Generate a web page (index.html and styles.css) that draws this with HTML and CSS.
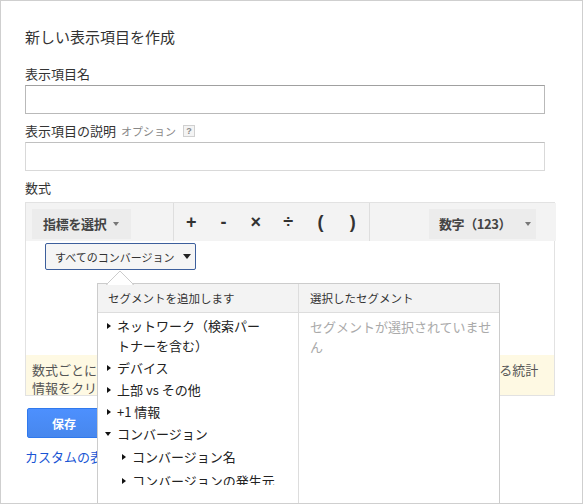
FILE: index.html
```html
<!DOCTYPE html>
<html lang="ja">
<head>
<meta charset="utf-8">
<title>新しい表示項目を作成</title>
<link rel="stylesheet" href="styles.css">
</head>
<body>
<div class="dialog">
  <h1 class="title">新しい表示項目を作成</h1>
  <div class="label label-first">表示項目名</div>
  <input class="field field-strong" type="text">
  <div class="label">表示項目の説明<span class="optional">オプション</span><span class="help">?</span></div>
  <input class="field" type="text">
  <div class="label">数式</div>
  <div class="formula">
    <div class="toolbar">
      <div class="tb-left"><span class="tb-btn tb-metric">指標を選択<span class="caret"></span></span></div>
      <div class="ops">
        <span class="op">+</span><span class="op">-</span><span class="op">×</span><span class="op">÷</span><span class="op">(</span><span class="op">)</span>
      </div>
      <div class="tb-right"><span class="tb-btn tb-num">数字（123）<span class="caret caret-num"></span></span></div>
    </div>
    <div class="formula-body">
      <span class="conv-btn">すべてのコンバージョン<span class="caret-dark"></span></span>
    </div>
    <div class="note">数式ごとにセグメントを選択すると、該当するクリックやコンバージョンに関する統計情報をクリックごとに確認できます。</div>
  </div>
  <button class="save" type="button">保存</button>
  <div class="link-row"><a class="link" href="#">カスタムの表示項目について</a></div>

  <div class="popup">
    <svg class="arrow" width="29" height="15" viewBox="0 0 29 15"><polygon points="0.5,14.5 14,1 27.5,14.5" fill="#fff" stroke="#cccccc" stroke-width="1"/><rect x="1.5" y="14" width="25" height="1.5" fill="#fff"/></svg>
    <div class="col col-left">
      <div class="col-head">セグメントを追加します</div>
      <div class="col-body">
        <ul class="seg-list">
          <li class="seg"><span class="mk"><span class="tri-r"></span></span><span class="seg-label narrow">ネットワーク（検索パートナーを含む）</span></li>
          <li class="seg"><span class="mk"><span class="tri-r"></span></span><span class="seg-label">デバイス</span></li>
          <li class="seg"><span class="mk"><span class="tri-r"></span></span><span class="seg-label">上部 vs その他</span></li>
          <li class="seg"><span class="mk"><span class="tri-r"></span></span><span class="seg-label">+1 情報</span></li>
          <li class="seg"><span class="mk"><span class="tri-d"></span></span><span class="seg-label">コンバージョン</span></li>
        </ul>
        <ul class="seg-list">
          <li class="seg sub"><span class="mk"><span class="tri-r"></span></span><span class="seg-label">コンバージョン名</span></li>
          <li class="seg sub"><span class="mk"><span class="tri-r"></span></span><span class="seg-label">コンバージョンの発生元</span></li>
          <li class="seg sub"><span class="mk"><span class="tri-r"></span></span><span class="seg-label">コンバージョンの種類</span></li>
        </ul>
      </div>
    </div>
    <div class="col col-right">
      <div class="col-head">選択したセグメント</div>
      <div class="empty">セグメントが選択されていません</div>
    </div>
  </div>
</div>
</body>
</html>
```

FILE: styles.css
```css
* { box-sizing: border-box; }

html, body {
  margin: 0;
  padding: 0;
  background: #fff;
}

body {
  font-family: "Noto Sans CJK JP", "Noto Sans", sans-serif;
  color: #333;
  font-size: 13px;
}

.dialog {
  position: relative;
  width: 583px;
  height: 504px;
  border: 1px solid #cfcfcf;
  overflow: hidden;
  padding: 26px 24px 0 24px;
  background: #fff;
}

.title {
  margin: 0;
  font-size: 15px;
  font-weight: normal;
  line-height: 20px;
  color: #333;
}

.label {
  margin-top: 7px;
  font-size: 13px;
  line-height: 20px;
  height: 20px;
  color: #333;
  display: flex;
  align-items: center;
}

.label-first { margin-top: 17px; }

.optional {
  margin-left: 5px;
  font-size: 11px;
  color: #888;
}

.help {
  margin-left: 7px;
  width: 12px;
  height: 12px;
  border: 1px solid #d0d0d0;
  background: #f4f4f4;
  color: #888;
  font-family: "Liberation Sans", sans-serif;
  font-size: 9px;
  font-weight: bold;
  line-height: 10px;
  text-align: center;
}

.field {
  display: block;
  margin: 1px 0 0 0;
  width: 520px;
  height: 29px;
  border: 1px solid #d9d9d9;
  border-top-color: #c0c0c0;
  padding: 0 6px;
  background: #fff;
  outline: none;
  font: inherit;
}

.field-strong {
  border-color: #b9b9b9;
  border-top-color: #a0a0a0;
}

.formula {
  margin-top: 4px;
  width: 530px;
  border: 1px solid #e2e2e2;
}

.toolbar {
  display: flex;
  height: 38px;
  background: #f3f3f3;
  margin-right: -2px;
}

.tb-left {
  width: 148px;
  border-right: 1px solid #dedede;
  padding: 4px 0 0 6px;
  display: flex;
  align-items: center;
}

.tb-btn {
  display: inline-flex;
  align-items: center;
  white-space: nowrap;
  height: 30px;
  background: #ececec;
  font-size: 13px;
  font-weight: bold;
  color: #444;
  line-height: 30px;
}

.tb-metric {
  width: 99px;
  padding: 0 0 0 11px;
  letter-spacing: -0.3px;
}

.caret {
  display: inline-block;
  margin-left: 6px;
  width: 0;
  height: 0;
  border-left: 3.5px solid transparent;
  border-right: 3.5px solid transparent;
  border-top: 4px solid #777;
}

.ops {
  width: 196px;
  border-right: 1px solid #dedede;
  padding-left: 1px;
  display: flex;
  align-items: center;
}

.op {
  width: 32.6px;
  text-align: center;
  font-family: "Liberation Sans", Arial, sans-serif;
  font-weight: bold;
  font-size: 18px;
  color: #333;
  line-height: 38px;
}

.tb-right {
  display: flex;
  align-items: center;
  padding: 4px 0 0 59px;
}

.tb-num {
  width: 107px;
  padding: 0 0 0 10px;
  letter-spacing: -0.4px;
}

.caret-num { margin-left: 14px; }

.formula-body {
  height: 114px;
  padding: 2px 0 0 19px;
}

.conv-btn {
  display: inline-flex;
  align-items: center;
  white-space: nowrap;
  width: 151px;
  height: 27px;
  padding-left: 9px;
  border: 1px solid #3d5f9c;
  border-radius: 2px;
  background: #f5f5f5;
  font-size: 11px;
  color: #333;
}

.caret-dark {
  display: inline-block;
  margin-left: 8px;
  width: 0;
  height: 0;
  border-left: 4px solid transparent;
  border-right: 4px solid transparent;
  border-top: 5px solid #222;
}

.note {
  height: 40px;
  overflow: hidden;
  background: #fef9e3;
  padding: 6px 14px 0 6px;
  font-size: 13px;
  line-height: 18px;
  color: #555;
}

.save {
  display: block;
  margin: 12px 0 0 2px;
  width: 74px;
  height: 30px;
  border: 1px solid #3079ed;
  border-radius: 2px;
  background: linear-gradient(#4d90fe, #4787ed);
  color: #fff;
  font-family: inherit;
  font-size: 12px;
  font-weight: bold;
  padding: 0;
}

.link-row {
  margin-top: 9px;
  line-height: 20px;
}

.link {
  color: #1a55d4;
  text-decoration: none;
  font-size: 13px;
}

/* segment popup */
.popup {
  position: absolute;
  left: 96px;
  top: 282px;
  width: 403px;
  height: 260px;
  border: 1px solid #cccccc;
  background: #fff;
  display: flex;
}

.arrow {
  position: absolute;
  left: 8px;
  top: -14px;
}

.col {
  width: 200px;
  height: 100%;
}

.col-left {
  border-right: 1px solid #dddddd;
  width: 201px;
}

.col-head {
  height: 29px;
  background: #f3f3f3;
  border-bottom: 1px solid #dddddd;
  font-size: 11.5px;
  line-height: 28px;
  color: #333;
  padding-left: 10px;
}

.col-right .col-head { padding-left: 11px; }

.col-body {
  height: 172px;
  overflow: hidden;
  padding-top: 2px;
}

.seg-list {
  list-style: none;
  margin: 0;
  padding: 0;
}

.seg {
  display: flex;
  align-items: flex-start;
  padding: 1px 0 1px 7px;
  font-size: 13px;
  line-height: 20px;
  color: #222;
}

.seg.sub {
  padding: 2px 0 2px 22px;
}

.mk {
  width: 12px;
  height: 20px;
  display: flex;
  align-items: center;
  flex: none;
}

.tri-r {
  margin-left: 2px;
  width: 0;
  height: 0;
  border-top: 3.5px solid transparent;
  border-bottom: 3.5px solid transparent;
  border-left: 4px solid #111;
}

.tri-d {
  width: 0;
  height: 0;
  border-left: 3.5px solid transparent;
  border-right: 3.5px solid transparent;
  border-top: 4px solid #111;
}

.seg-label.narrow { max-width: 152px; }

.empty {
  padding: 4px 4px 0 11px;
  font-size: 13px;
  line-height: 20px;
  color: #aaa;
}
```
